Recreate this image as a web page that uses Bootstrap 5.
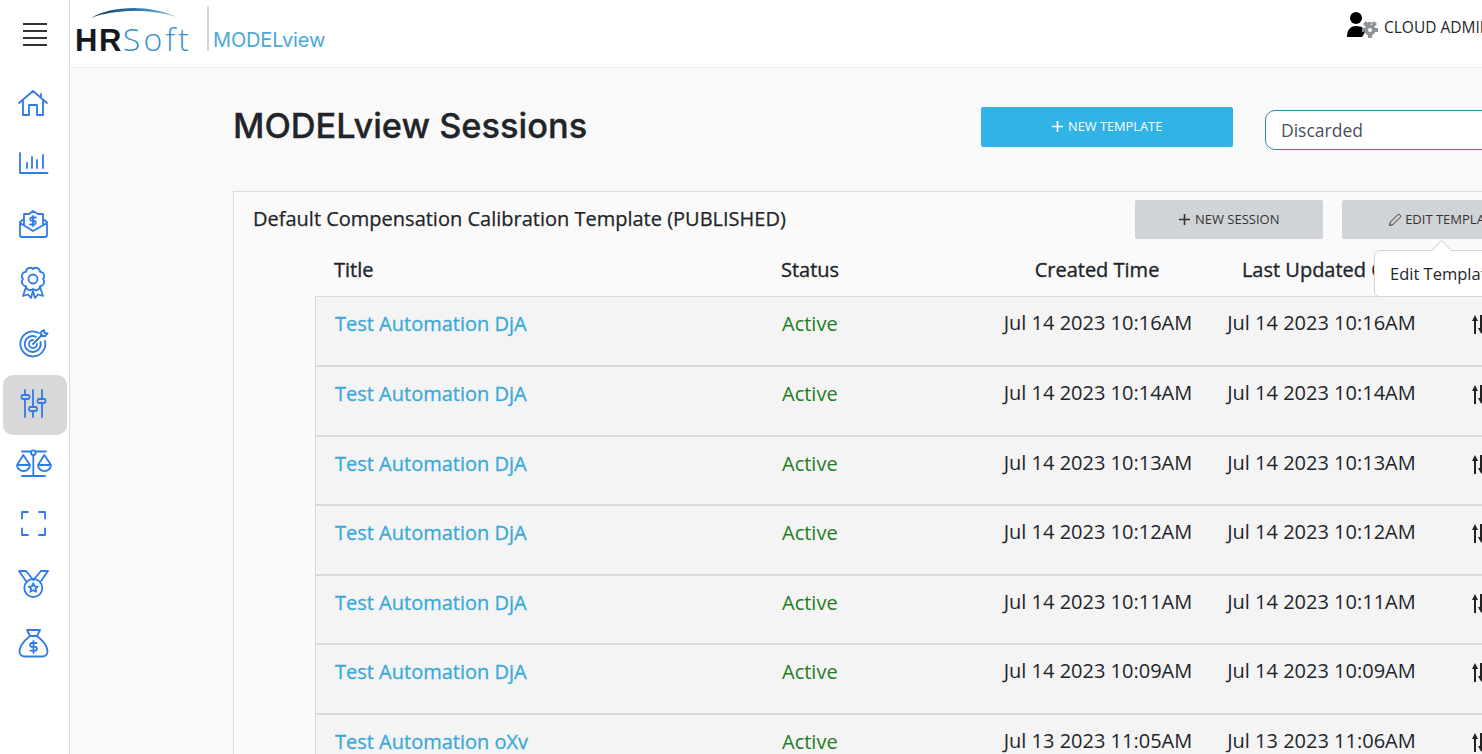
<!DOCTYPE html>
<html lang="en">
<head>
    <meta charset="UTF-8">
    <meta name="viewport" content="width=device-width, initial-scale=1.0">
    <title>MODELview Sessions</title>
    <link href="https://cdn.jsdelivr.net/npm/bootstrap@5.3.0/dist/css/bootstrap.min.css" rel="stylesheet">
    <style>
        html, body { height: 100%; overflow: hidden; }
        body { font-family: "Open Sans", "Liberation Sans", sans-serif; color: #212529; background: #f9f9f9; width: 1482px; }
        .app-shell { height: 754px; width: 1482px; overflow: hidden; }
        .side-rail { width: 70px; flex: none; background: #fff; border-right: 1px solid #dcdcdc; }
        .burger { height: 75px; padding-left: 23px; padding-top: 23px; }
        .burger span { display: block; width: 24px; height: 2px; background: #333; margin-bottom: 5px; }
        .rail-link { display: flex; width: 64px; height: 60px; margin-left: 3px; padding-right: 4px; align-items: center; justify-content: center; border-radius: 10px; }
        .rail-link.current { background: #d8d8d8; }
        .rail-link svg { width: 30px; height: 30px; overflow: visible; fill: none; stroke: #2f7be8; stroke-width: 1.8; stroke-linecap: round; stroke-linejoin: round; }
        .top-strip { height: 68px; background: #fff; border-bottom: 1px solid #efefef; }
        .logo-box { position: relative; width: 126px; height: 67px; margin-left: 5px; }
        .logo-arc { position: absolute; left: 15px; top: 6px; width: 88px; height: 13px; }
        .logo-text { position: absolute; left: 0; top: 19px; font-size: 32px; line-height: 40px; white-space: nowrap; }
        .logo-hr { font-family: "Liberation Sans", sans-serif; font-weight: 700; color: #15181c; letter-spacing: 1.5px; font-size: 31px; }
        .logo-soft { color: #3a8fc9; letter-spacing: 3.2px; font-weight: 300; }
        .logo-rule { width: 2px; height: 45px; background: #d5d5d5; margin: 6px 6px 0 6px; }
        .logo-product { font-family: Inter, sans-serif; color: #4ba9dc; font-size: 20px; line-height: 28px; margin: 26px 0 0 -2px; letter-spacing: -.15px; }
        .user-chip { position: absolute; left: 1346px; top: 11px; font-size: 15.5px; white-space: nowrap; }
        .user-chip span { padding-top: 5px; }
        .page-body { padding: 38px 0 0 163px; width: 1412px; }
        .page-head { height: 85px; }
        .page-title { font-family: Inter, sans-serif; font-weight: 500; font-size: 34.4px; line-height: 40px; margin: 0; width: 748px; flex: none; color: #212529; -webkit-text-stroke: .3px #212529; }
        .btn-new-template { width: 252px; height: 40px; flex: none; margin-top: 1px; background: #31b3e5; border: 0; border-radius: 2px; color: #fff; font-size: 12.8px; padding: 0; }
        .plus-mark { width: 11px; height: 11px; margin-right: 2px; vertical-align: -1px; fill: none; stroke-width: 1.6; }
        .status-select { width: 300px; height: 40px; margin: 4px 0 0 32px; flex: none; font-size: 17.5px; color: #495057; border: 1px solid #2c8aa5; border-radius: 10px; padding-left: 15px; background-color: #fff; }
        .template-panel { width: 1300px; height: 700px; border: 1px solid #dcdcdc; background: #fafafa; }
        .panel-head { height: 54px; padding: 8px 0 0 19px; }
        .panel-title { width: 882px; flex: none; font-size: 20px; line-height: 37px; -webkit-text-stroke: .25px #212529; }
        .btn-grey { height: 39px; flex: none; background: #d1d4d7; border: 0; border-radius: 2px; color: #333; font-size: 13px; padding: 0; }
        .btn-session { width: 188px; margin-right: 19px; }
        .btn-edit { width: 203px; }
        .tip-box { position: absolute; left: 1374px; top: 250px; width: 140px; height: 47px; background: #fff; border: 1px solid #d4d4d4; border-radius: 6px; padding: 11px 15px; font-size: 16.5px; line-height: 24px; white-space: nowrap; z-index: 5; }
        .tip-arrow { position: absolute; left: 59px; top: -8px; width: 15px; height: 15px; background: #fff; border-left: 1px solid #d4d4d4; border-top: 1px solid #d4d4d4; transform: rotate(45deg); }
        .col-title { width: 447px; flex: none; }
        .col-status { width: 200px; flex: none; }
        .col-created { width: 232px; flex: none; text-align: center; }
        .col-updated { width: 215px; flex: none; text-align: center; white-space: nowrap; }
        .head-row { height: 50.4px; margin-left: 81px; padding-left: 19px; padding-top: 11px; font-size: 20px; line-height: 26px; -webkit-text-stroke: .35px #212529; }
        .head-row > div { font-weight: 500; }
        .sessions-box { margin-left: 81px; border-top: 1px solid #d8d8d8; border-left: 1px solid #d8d8d8; }
        .session-row { height: 69.6px; padding: 13px 0 0 19px; background: #f4f4f4; border-bottom: 2px solid #dadada; font-size: 20px; line-height: 28px; }
        .session-link { color: #3aa9da; text-decoration: none; font-weight: 500; -webkit-text-stroke: .3px #3aa9da; }
        .status-on { color: #1e7e1e; }
        .date-cell { margin-top: -1px; }
        .sort-mark { width: 16px; height: 24px; margin-left: 43px; margin-top: 4px; flex: none; }
    </style>
</head>
<body>
<div class="app-shell d-flex position-relative">
    <!-- left rail -->
    <nav class="side-rail">
        <div class="burger"><span></span><span></span><span></span><span></span></div>
        <a class="rail-link" href="#"><svg viewBox="0 0 30 30"><path d="M1 13 15 1l14 12M23 7V4M5 11v14h6V15h8v10h6V11"/></svg></a>
        <a class="rail-link" href="#"><svg viewBox="0 0 30 30"><path d="M2 3v20h27.500M9 13v5M14 7v11M19 10v8M25 5v13"/></svg></a>
        <a class="rail-link" href="#"><svg viewBox="0 0 30 30"><path d="M6 9 2 12v13a2 2 0 0 0 2 2h23a2 2 0 0 0 2-2V12l-4-3M2 13l13 8 14-8M6 15V4h5l4-3 5 3h5v11"/><path d="M18 7.500h-4a1.500 1.500 0 0 0 0 3.500h2a1.500 1.500 0 0 1 0 3.500h-4M15 6v10"/></svg></a>
        <a class="rail-link" href="#"><svg viewBox="0 0 30 30"><path d="M15-1A4.200 4.200 0 0 1 22.100 1.900 4.200 4.200 0 0 1 25 9 4.200 4.200 0 0 1 22.100 16.100 4.200 4.200 0 0 1 15 19 4.200 4.200 0 0 1 7.900 16.100 4.200 4.200 0 0 1 5 9 4.200 4.200 0 0 1 7.900 1.900 4.200 4.200 0 0 1 15-1z"/><circle cx="15" cy="9" r="4.500"/><path d="M8 17 5 26l5-1.500 3 3.500 2-7M22 17l3 9-5-1.500-3 3.500-2-7"/></svg></a>
        <a class="rail-link" href="#"><svg viewBox="0 0 30 30"><path d="M21 3A12.500 12.500 0 1 0 27 11M18 6.700A8 8 0 1 0 22.500 12M15 10a4 4 0 1 0 4 4M15 14 24 5M23 6V2l3-2 .5 3 3 .5-2 2.500h-4"/></svg></a>
        <a class="rail-link current" href="#"><svg viewBox="0 0 30 30"><path d="M7 0v5M7 9v18M15 0v17M15 21v6M24 0v9M24 13v14"/><rect x="3.500" y="5" width="8" height="4" rx="1.500"/><rect x="11" y="17" width="8" height="4" rx="1.500"/><rect x="19.500" y="9" width="8" height="4" rx="1.500"/></svg></a>
        <a class="rail-link" href="#"><svg viewBox="0 0 30 30"><circle cx="15.300" cy="2.700" r="2.300"/><path d="M4 1.500h9M18 1.500h10M15.300 5v21M4 26h23M5.300 5-1 15h13zM26.300 5 20 15h13zM-1 15a6.500 6 0 0 0 13 0M20 15a6.500 6 0 0 0 13 0"/></svg></a>
        <a class="rail-link" href="#"><svg viewBox="0 0 30 30"><path d="M10 2H4v6.500M21 2h6v6.500M4 18.500V25h6M27 18.500V25h-6"/></svg></a>
        <a class="rail-link" href="#"><svg viewBox="0 0 30 30"><circle cx="15.300" cy="18" r="9"/><path d="M15.300 13.300l1.400 3 3.100.3-2.300 2.100.7 3.100-2.900-1.600-2.900 1.600.7-3.100-2.300-2.100 3.100-.3zM8 11 1 1h7l7.300 9L23 1h7l-7 10"/></svg></a>
        <a class="rail-link" href="#"><svg viewBox="0 0 30 30"><path d="M9 0h13l-3 6h-7zM12 6C7 10 1.500 16 1.500 21.500a5 5 0 0 0 5 5h18a5 5 0 0 0 5-5C29.500 16 24 10 19 6"/><path d="M18.500 13h-4.500a1.600 1.600 0 0 0 0 3.800h3a1.600 1.600 0 0 1 0 3.800h-4.500M15.500 11v12"/></svg></a>
    </nav>

    <div class="flex-grow-1">
        <!-- top bar -->
        <header class="top-strip d-flex">
            <div class="logo-box">
                <svg class="logo-arc" viewBox="0 0 88 13">
                    <defs><linearGradient id="arcFade" x1="0" x2="1" y1="0" y2="0"><stop offset="0" stop-color="#16365e"/><stop offset=".5" stop-color="#2a75ae"/><stop offset="1" stop-color="#7fc0e0"/></linearGradient></defs>
                    <path d="M1 12C20 0 60-2 86 11 60 3 25 3 1 12z" fill="url(#arcFade)"/>
                </svg>
                <div class="logo-text"><span class="logo-hr">HR</span><span class="logo-soft">Soft</span></div>
            </div>
            <div class="logo-rule"></div>
            <div class="logo-product">MODELview</div>
        </header>
        <div class="user-chip d-flex align-items-start">
            <svg width="34" height="28" viewBox="0 0 34 28" class="me-1"><circle cx="10" cy="7" r="6"/><path d="M1 26c0-7 3-11 9-11s9 3 9 5-3 6-3 6z"/><g fill="#8f9397"><circle cx="24" cy="19" r="5.500"/><path d="M22 11h4v16h-4zM16 17h16v4H16zM17 13l3-3 10 10-3 3zM31 13l-3-3-10 10 3 3z"/></g><circle cx="24" cy="19" r="2" fill="#fff"/></svg>
            <span>CLOUD ADMIN</span>
        </div>

        <!-- page -->
        <main class="page-body">
            <div class="page-head d-flex align-items-start">
                <h1 class="page-title">MODELview Sessions</h1>
                <button class="btn btn-new-template" type="button"><svg class="plus-mark" viewBox="0 0 11 11" stroke="#fff"><path d="M5.500 0v11M0 5.500h11"/></svg> NEW TEMPLATE</button>
                <select class="form-select status-select"><option>Discarded</option></select>
            </div>
            <section class="template-panel">
                <div class="panel-head d-flex align-items-start">
                    <div class="panel-title">Default Compensation Calibration Template (PUBLISHED)</div>
                    <button class="btn btn-grey btn-session" type="button"><svg class="plus-mark" viewBox="0 0 11 11" stroke="#333"><path d="M5.500 0v11M0 5.500h11"/></svg> NEW SESSION</button>
                    <button class="btn btn-grey btn-edit" type="button"><svg width="14" height="14" viewBox="0 0 14 14" fill="none" stroke="#333"><path d="M1.500 12.500l.8-3.300L9.700 1.800a1.400 1.400 0 0 1 2 0l.5.500a1.400 1.400 0 0 1 0 2L4.800 11.700z"/></svg> EDIT TEMPLATE</button>
                </div>
                <div class="head-row d-flex">
                    <div class="col-title">Title</div>
                    <div class="col-status">Status</div>
                    <div class="col-created">Created Time</div>
                    <div class="col-updated">Last Updated On</div>
                </div>
                <div class="sessions-box" id="rows"></div>
            </section>
        </main>
    </div>
    <div class="tip-box"><div class="tip-arrow"></div>Edit Template</div>
</div>

<script src="https://cdn.jsdelivr.net/npm/bootstrap@5.3.0/dist/js/bootstrap.bundle.min.js"></script>
<script>
// session rows
const sessions = [
    ["Test Automation DjA", "Jul 14 2023 10:16AM", "Jul 14 2023 10:16AM"],
    ["Test Automation DjA", "Jul 14 2023 10:14AM", "Jul 14 2023 10:14AM"],
    ["Test Automation DjA", "Jul 14 2023 10:13AM", "Jul 14 2023 10:13AM"],
    ["Test Automation DjA", "Jul 14 2023 10:12AM", "Jul 14 2023 10:12AM"],
    ["Test Automation DjA", "Jul 14 2023 10:11AM", "Jul 14 2023 10:11AM"],
    ["Test Automation DjA", "Jul 14 2023 10:09AM", "Jul 14 2023 10:09AM"],
    ["Test Automation oXv", "Jul 13 2023 11:05AM", "Jul 13 2023 11:06AM"]
];
const sortIcon = '<svg class="sort-mark" viewBox="0 0 16 24" fill="#222"><path d="M3 1 6 7H4v13H2V7H0zM8 1h2.500v13H13l-3.700 6L6 14h2z"/></svg>';
document.getElementById("rows").innerHTML = sessions.map(s => `
    <div class="session-row d-flex">
        <div class="col-title"><a class="session-link" href="#">${s[0]}</a></div>
        <div class="col-status status-on">Active</div>
        <div class="col-created date-cell">${s[1]}</div>
        <div class="col-updated date-cell">${s[2]}</div>
        ${sortIcon}
    </div>`).join("");
</script>
</body>
</html>
